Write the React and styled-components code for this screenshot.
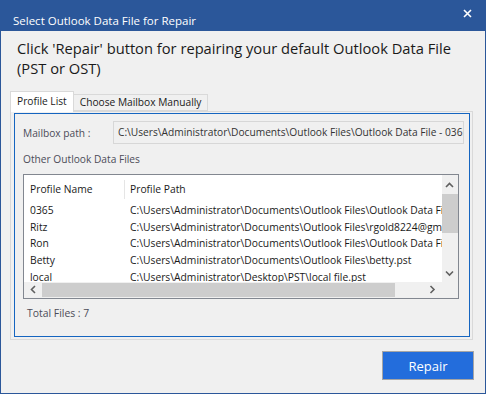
import React from "react";
import styled, { createGlobalStyle } from "styled-components";

const GlobalStyle = createGlobalStyle`
  html, body { margin: 0; padding: 0; background: #f0f0f0; }
  * { box-sizing: border-box; }
  body { font-family: "Open Sans", "Noto Sans", sans-serif; }
`;

const Window = styled.div`
  width: 486px;
  height: 394px;
  border: 1px solid #2b579a;
  background: #f0f0f0;
  display: flex;
  flex-direction: column;
  overflow: hidden;
`;

const TitleBar = styled.div`
  height: 30px;
  background: #2b579a;
  color: #fff;
  display: flex;
  align-items: flex-end;
  padding: 0 10px 2px 12px;
  position: relative;
`;

const Title = styled.div`
  font-size: 11.5px;
  line-height: 16px;
`;

const CloseBtn = styled.div`
  position: absolute;
  right: 13px;
  top: 8px;
  width: 9px;
  height: 9px;
  svg { display: block; }
`;

const Heading = styled.div`
  margin: 7px 0 0 16px;
  font-size: 14.7px;
  line-height: 20px;
  color: #1a1a1a;
`;

const Tabs = styled.div`
  margin: 13px 0 0 9px;
  width: 463px;
  display: flex;
  flex-direction: column;
`;

const TabStrip = styled.div`
  display: flex;
  align-items: flex-end;
  height: 20px;
  position: relative;
  z-index: 1;
`;

const Tab = styled.div`
  height: ${(p) => (p.$active ? "21px" : "17px")};
  padding: 0 6px;
  margin-bottom: ${(p) => (p.$active ? "-1px" : "0")};
  border: 1px solid #d9d9d9;
  border-bottom: ${(p) => (p.$active ? "none" : "1px solid #d9d9d9")};
  border-left: ${(p) => (p.$active ? "1px solid #d9d9d9" : "none")};
  background: ${(p) => (p.$active ? "#ffffff" : "#f0f0f0")};
  font-size: 10.2px;
  line-height: ${(p) => (p.$active ? "19px" : "15px")};
  color: #1a1a1a;
  white-space: nowrap;
`;

const TabPage = styled.div`
  border: 1px solid #d9d9d9;
  padding: 1px 2px 2px 3px;
  height: 229px;
`;

const Panel = styled.div`
  border: 1px solid #1565c0;
  height: 100%;
  padding: 7px 5px 0 8px;
  display: flex;
  flex-direction: column;
`;

const MailRow = styled.div`
  display: flex;
  align-items: center;
  height: 23px;
`;

const Label = styled.div`
  font-size: 10.2px;
  color: #4c4c58;
  width: 90px;
  flex-shrink: 0;
`;

const PathBox = styled.div`
  flex: 1;
  height: 23px;
  border: 1px solid #d7d7d7;
  background: #f0f0f0;
  font-size: 10.2px;
  line-height: 21px;
  padding-left: 4px;
  color: #333;
  white-space: nowrap;
  overflow: hidden;
`;

const SubLabel = styled(Label)`
  width: auto;
  margin-top: 7px;
  line-height: 16px;
`;

const List = styled.div`
  margin-top: 7px;
  width: 436px;
  height: 125px;
  border: 1px solid #828790;
  background: #fff;
  display: grid;
  grid-template-columns: 1fr 16px;
  grid-template-rows: 1fr 16px;
`;

const ListBody = styled.div`
  overflow: hidden;
`;

const Row = styled.div`
  display: grid;
  grid-template-columns: 100px max-content;
  height: ${(p) => (p.$header ? "27px" : "16.6px")};
  align-items: center;
  font-size: 10.3px;
  color: #1a1a1a;
  white-space: nowrap;
`;

const Cell = styled.div`
  height: 100%;
  display: flex;
  align-items: center;
  border-left: ${(p) => (p.$sep ? "1px solid #e5e5e5" : "none")};
  padding-left: ${(p) => (p.$sep ? "5px" : "6px")};
`;

const HeaderCell = styled(Cell)`
  height: 19px;
  margin-top: 1px;
`;

const VScroll = styled.div`
  background: #f0f0f0;
  position: relative;
`;

const HScroll = styled.div`
  background: #f0f0f0;
  position: relative;
`;

const Corner = styled.div`
  background: #f0f0f0;
`;

const Thumb = styled.div`
  position: absolute;
  background: #cdcdcd;
`;

const Arrow = styled.svg`
  position: absolute;
  display: block;
`;

const Footer = styled.div`
  margin: 7px 0 0 4px;
  font-size: 10.4px;
  color: #4c4c58;
`;

const ButtonRow = styled.div`
  display: flex;
  justify-content: flex-end;
  padding: 11px 11px 0 0;
`;

const Button = styled.button`
  width: 92px;
  height: 29px;
  background: #236ddc;
  border: 1px solid #a5a5a5;
  color: #fff;
  font-family: "Open Sans", "Noto Sans", sans-serif;
  font-size: 13px;
  padding: 0;
`;

const rows = [
  ["0365", "C:\\Users\\Administrator\\Documents\\Outlook Files\\Outlook Data File - 0365.pst"],
  ["Ritz", "C:\\Users\\Administrator\\Documents\\Outlook Files\\rgold8224@gmail.com.pst"],
  ["Ron", "C:\\Users\\Administrator\\Documents\\Outlook Files\\Outlook Data File - Ron.pst"],
  ["Betty", "C:\\Users\\Administrator\\Documents\\Outlook Files\\betty.pst"],
  ["local", "C:\\Users\\Administrator\\Desktop\\PST\\local file.pst"],
];

const Chevron = ({ dir, style }) => {
  const d = {
    up: "M1 5 L4.5 1.5 L8 5",
    down: "M1 1.5 L4.5 5 L8 1.5",
    left: "M5 1 L1.5 4.5 L5 8",
    right: "M1.5 1 L5 4.5 L1.5 8",
  }[dir];
  const vertical = dir === "up" || dir === "down";
  return (
    <Arrow
      width={vertical ? 9 : 7}
      height={vertical ? 7 : 9}
      viewBox={vertical ? "0 0 9 7" : "0 0 7 9"}
      style={style}
    >
      <path d={d} fill="none" stroke="#606060" strokeWidth="1.6" />
    </Arrow>
  );
};

export default function App() {
  return (
    <>
      <GlobalStyle />
      <Window>
        <TitleBar>
          <Title>Select Outlook Data File for Repair</Title>
          <CloseBtn>
            <svg width="9" height="9" viewBox="0 0 9 9">
              <path d="M1 1 L8 8 M8 1 L1 8" stroke="#fff" strokeWidth="1.6" />
            </svg>
          </CloseBtn>
        </TitleBar>
        <Heading>
          Click 'Repair' button for repairing your default Outlook Data File
          <br />
          (PST or OST)
        </Heading>
        <Tabs>
          <TabStrip>
            <Tab $active>Profile List</Tab>
            <Tab>Choose Mailbox Manually</Tab>
          </TabStrip>
          <TabPage>
            <Panel>
              <MailRow>
                <Label>Mailbox path :</Label>
                <PathBox>
                  C:\Users\Administrator\Documents\Outlook Files\Outlook Data File - 0365.pst
                </PathBox>
              </MailRow>
              <SubLabel>Other Outlook Data Files</SubLabel>
              <List>
                <ListBody>
                  <Row $header>
                    <HeaderCell>Profile Name</HeaderCell>
                    <HeaderCell $sep>Profile Path</HeaderCell>
                  </Row>
                  {rows.map(([n, p]) => (
                    <Row key={n}>
                      <Cell>{n}</Cell>
                      <Cell>{p}</Cell>
                    </Row>
                  ))}
                </ListBody>
                <VScroll>
                  <Chevron dir="up" style={{ left: 3, top: 7 }} />
                  <Thumb style={{ left: 0, right: 0, top: 19, height: 39 }} />
                  <Chevron dir="down" style={{ left: 3, top: 95 }} />
                </VScroll>
                <HScroll>
                  <Chevron dir="left" style={{ left: 6, top: 3 }} />
                  <Thumb style={{ left: 18, width: 353, top: 1, bottom: 1 }} />
                  <Chevron dir="right" style={{ left: 405, top: 3 }} />
                </HScroll>
                <Corner />
              </List>
              <Footer>Total Files : 7</Footer>
            </Panel>
          </TabPage>
        </Tabs>
        <ButtonRow>
          <Button>Repair</Button>
        </ButtonRow>
      </Window>
    </>
  );
}
